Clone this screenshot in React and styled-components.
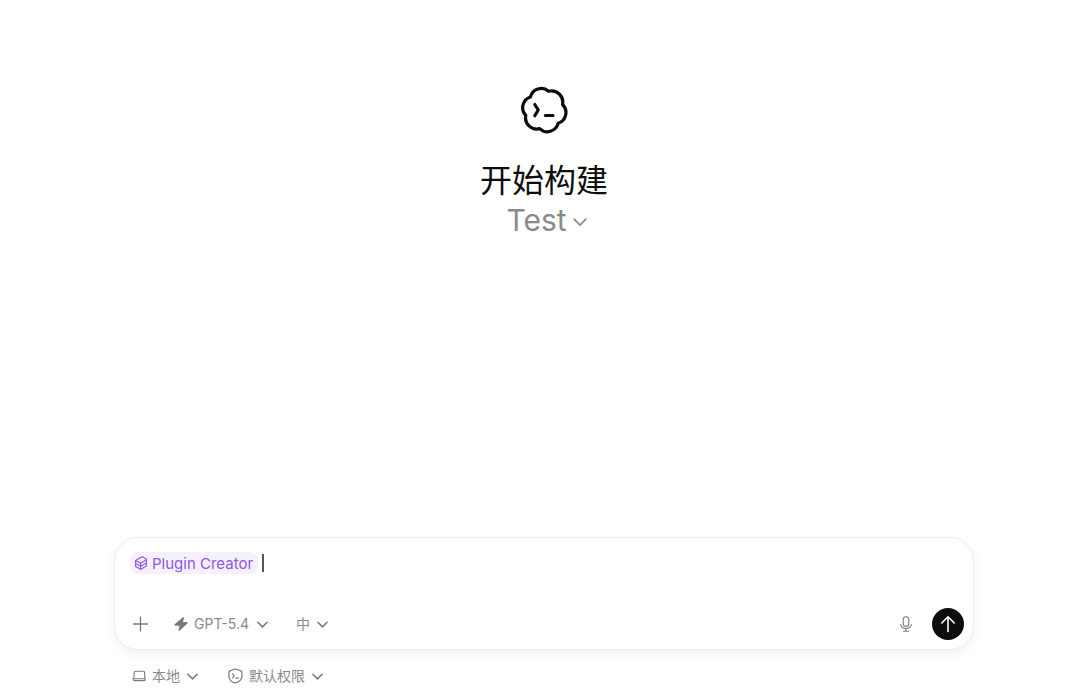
import { useState } from "react";
import styled, { createGlobalStyle, ThemeProvider } from "styled-components";

const theme = {
  colors: {
    bg: "#ffffff",
    text: "#0d0d0d",
    muted: "#8a8a8a",
    icon: "#7a7a7a",
    border: "#ececec",
    accent: "#9155e2",
    accentBG: "#f6f0fe"
  },
  font: `Inter, "Noto Sans CJK SC", sans-serif`
};

const LogoIcon = () => (
  <svg width="48" height="48" viewBox="-1 -1 48 48" fill="none" stroke="currentColor" strokeWidth="3.2" strokeLinecap="round" strokeLinejoin="round" aria-hidden="true">
    <path d="M9.4 10A11.2 11.2 0 0 1 27.6 4.3A11.2 11.2 0 0 1 41.5 17.5A11.2 11.2 0 0 1 37.2 36.2A11.2 11.2 0 0 1 18.6 41.6A11.2 11.2 0 0 1 4.8 28.4A11.2 11.2 0 0 1 9.4 10Z" />
    <path d="M13.8 17.5L17.2 23L13.8 28.7M24.4 28.5H32" />
  </svg>
);

const Chevron = ({ size = 11, stroke = 1.5 }) => (
  <svg width={size} height={size} viewBox="0 0 11 11" fill="none" stroke="currentColor" strokeWidth={stroke} strokeLinecap="round" strokeLinejoin="round" aria-hidden="true">
    <path d="M0.9 3.3L5.5 7.9L10.1 3.3" />
  </svg>
);

const PluginIcon = () => (
  <svg width="14" height="14" viewBox="0 0 14 14" fill="none" stroke="currentColor" strokeWidth="1.1" strokeLinecap="round" strokeLinejoin="round" aria-hidden="true">
    <path d="M1.6 4.6L7.6 1.1Q8.3 0.7 9 1.1L11.8 2.7Q12.4 3.1 12.4 3.8V9.2Q12.4 9.9 11.8 10.3L7.4 13Q6.7 13.4 6 13L2.2 10.8Q1.6 10.4 1.6 9.7Z" />
    <path d="M1.6 4.6L6.6 7.2L12.3 3.8M6.6 7.2V13.1M1.6 7.6L6.6 10.2L12.3 6.9" />
  </svg>
);

const PlusIcon = () => (
  <svg width="16" height="16" viewBox="0 0 16 16" fill="none" stroke="currentColor" strokeWidth="1.3" strokeLinecap="round" aria-hidden="true">
    <path d="M8.5 1V15M1.5 8H15.5" />
  </svg>
);

const BoltIcon = () => (
  <svg width="14" height="14" viewBox="0 0 14 14" fill="currentColor" aria-hidden="true">
    <path d="M8.6 0.4C9.3 -0.2 10.2 0.3 10 1.1L9 4.9H12.7C13.6 4.9 14 5.8 13.4 6.4L5.9 13.5C5.2 14.1 4.3 13.6 4.5 12.8L5.6 8.8H1.3C0.4 8.8 0 7.9 0.6 7.3Z" />
  </svg>
);

const LaptopIcon = () => (
  <svg width="14" height="14" viewBox="0 0 14 14" fill="none" stroke="currentColor" strokeWidth="1.1" strokeLinecap="round" strokeLinejoin="round" aria-hidden="true">
    <path d="M2 9.5V3.9Q2 2.2 3.7 2.2H11Q12.7 2.2 12.7 3.9V9.5M1.2 9.7H13.4V10.2Q13.4 11.6 12 11.6H2.6Q1.2 11.6 1.2 10.2Z" />
  </svg>
);

const ShieldIcon = () => (
  <svg width="16" height="16" viewBox="0 0 16 16" fill="none" stroke="currentColor" strokeWidth="1.2" strokeLinecap="round" strokeLinejoin="round" aria-hidden="true">
    <path d="M8.4 0.9Q8.9 0.9 9.4 1.2L13.8 2.9Q14.9 3.4 14.9 4.5V7.4C14.9 11.2 12.6 13.6 9.3 14.8Q8.4 15.1 7.5 14.8C4.2 13.6 1.9 11.2 1.9 7.4V4.5Q1.9 3.4 3 2.9L7.4 1.2Q7.9 0.9 8.4 0.9Z" />
    <path d="M5.6 5.8L7.1 7.9L5.6 10M9 10.1H11.3" />
  </svg>
);

const MicIcon = () => (
  <svg width="16" height="16" viewBox="0 0 16 16" fill="none" stroke="currentColor" strokeWidth="1.1" strokeLinecap="round" strokeLinejoin="round" aria-hidden="true">
    <rect x="5.2" y="0.8" width="5.6" height="9.4" rx="2.8" />
    <path d="M2.6 8.6C3.3 11 5.3 12.4 8 12.4S12.7 11 13.4 8.6M8 12.4V15.2M5.5 15.2H10.5" />
  </svg>
);

const ArrowUpIcon = () => (
  <svg width="16" height="18" viewBox="0 0 16 18" fill="none" stroke="currentColor" strokeWidth="1.6" strokeLinecap="round" strokeLinejoin="round" aria-hidden="true">
    <path d="M8 16.4V1.8M1.8 8L8 1.8L14.2 8" />
  </svg>
);

const Dropdown = ({ id, label, icon, options }) => (
  <Picker>
    {icon}
    <Select id={id} aria-label={label} defaultValue={options[0]}>
      {options.map((option) => (
        <option key={option}>{option}</option>
      ))}
    </Select>
    <Chevron />
  </Picker>
);

const App = () => {
  const [prompt, setPrompt] = useState("");

  return (
    <ThemeProvider theme={theme}>
      <GlobalStyle />
      <Page>
        <Hero>
          <LogoIcon />
          <Title>开始构建</Title>
          <ProjectPicker>
            <ProjectSelect aria-label="项目" defaultValue="Test">
              <option>Test</option>
            </ProjectSelect>
            <Chevron size={14} stroke={1.3} />
          </ProjectPicker>
        </Hero>
        <Bottom>
          <Composer onSubmit={(e) => e.preventDefault()}>
            <PromptRow>
              <Chip>
                <PluginIcon />
                Plugin Creator
              </Chip>
              {!prompt && <Caret />}
              <PromptInput
                type="text"
                name="prompt"
                aria-label="提示词"
                autoComplete="off"
                value={prompt}
                onChange={(e) => setPrompt(e.target.value)}
              />
            </PromptRow>
            <Toolbar>
              <IconButton type="button" aria-label="添加">
                <PlusIcon />
              </IconButton>
              <Pickers>
                <Dropdown id="model" label="模型" icon={<BoltIcon />} options={["GPT-5.4"]} />
                <Dropdown id="effort" label="推理强度" options={["中"]} />
              </Pickers>
              <Actions>
                <IconButton type="button" aria-label="语音输入">
                  <MicIcon />
                </IconButton>
                <SendButton type="submit" aria-label="发送">
                  <ArrowUpIcon />
                </SendButton>
              </Actions>
            </Toolbar>
          </Composer>
          <Footer>
            <Dropdown id="location" label="运行位置" icon={<LaptopIcon />} options={["本地"]} />
            <Dropdown id="permission" label="权限" icon={<ShieldIcon />} options={["默认权限"]} />
          </Footer>
        </Bottom>
      </Page>
    </ThemeProvider>
  );
};

const GlobalStyle = createGlobalStyle`
  * {
    box-sizing: border-box;
  }

  body {
    margin: 0;
    background-color: ${theme.colors.bg};
    color: ${theme.colors.text};
    font-family: ${theme.font};
  }

  button, input, select {
    font-family: inherit;
  }

  svg {
    display: block;
    flex-shrink: 0;
  }
`;

const Page = styled.main`
  display: flex;
  flex-direction: column;
  justify-content: space-between;
  align-items: center;
  min-height: 100vh;
  padding: 0 16px 0 24px;
`;

const Hero = styled.header`
  display: flex;
  flex-direction: column;
  align-items: center;
  padding-top: 86px;
`;

const Title = styled.h1`
  margin: 27px 0 0;
  font-size: 32px;
  line-height: 40px;
  font-weight: 400;
`;

const ProjectPicker = styled.div`
  display: flex;
  align-items: center;
  padding-left: 6px;
  color: ${({ theme }) => theme.colors.muted};

  svg {
    margin-top: 4px;
    pointer-events: none;
  }
`;

const Select = styled.select`
  appearance: none;
  border: none;
  margin: 0 -11px 0 0;
  padding: 0 18px 0 0;
  background: transparent;
  color: ${({ theme }) => theme.colors.muted};
  font-size: 14px;
  line-height: 20px;
  outline: none;
  cursor: pointer;
`;

const ProjectSelect = styled(Select)`
  margin-right: -14px;
  padding-right: 20px;
  font-size: 30px;
  line-height: 38px;
`;

const Bottom = styled.section`
  width: 100%;
  max-width: 860px;
`;

const Composer = styled.form`
  display: flex;
  flex-direction: column;
  gap: 34px;
  padding: 14px 9px 9px 15px;
  border: 1px solid ${({ theme }) => theme.colors.border};
  border-radius: 24px;
  background-color: ${({ theme }) => theme.colors.bg};
  box-shadow: 0 4px 12px rgba(0, 0, 0, 0.05);
`;

const PromptRow = styled.div`
  display: flex;
  align-items: center;
  height: 22px;
`;

const Chip = styled.span`
  display: flex;
  align-items: center;
  gap: 4px;
  height: 22px;
  padding: 0 5px 0 4px;
  border-radius: 8px;
  background-color: ${({ theme }) => theme.colors.accentBG};
  color: ${({ theme }) => theme.colors.accent};
  font-size: 15px;
  white-space: nowrap;
`;

const Caret = styled.span`
  width: 2px;
  height: 18px;
  margin-left: 4px;
  background-color: #555555;
`;

const PromptInput = styled.input`
  flex: 1;
  min-width: 0;
  border: none;
  padding: 0 4px;
  background: transparent;
  color: inherit;
  font-size: 15px;
  outline: none;
`;

const Toolbar = styled.div`
  display: flex;
  align-items: center;
  gap: 24px;
  height: 32px;
`;

const Pickers = styled.div`
  display: flex;
  align-items: center;
  gap: 28px;
`;

const Picker = styled.div`
  display: flex;
  align-items: center;
  gap: 6px;
  color: ${({ theme }) => theme.colors.icon};

  select + svg {
    margin-left: -6px;
    pointer-events: none;
  }
`;

const Actions = styled.div`
  display: flex;
  align-items: center;
  gap: 16px;
  margin-left: auto;
`;

const IconButton = styled.button`
  display: flex;
  align-items: center;
  justify-content: center;
  width: 20px;
  height: 20px;
  padding: 0;
  border: none;
  background: transparent;
  color: ${({ theme }) => theme.colors.icon};
  cursor: pointer;
`;

const SendButton = styled(IconButton)`
  width: 32px;
  height: 32px;
  border-radius: 50%;
  background-color: ${({ theme }) => theme.colors.text};
  color: ${({ theme }) => theme.colors.bg};
`;

const Footer = styled.footer`
  display: flex;
  align-items: center;
  gap: 29px;
  height: 41px;
  padding: 11px 18px 0;
`;

export default App;
